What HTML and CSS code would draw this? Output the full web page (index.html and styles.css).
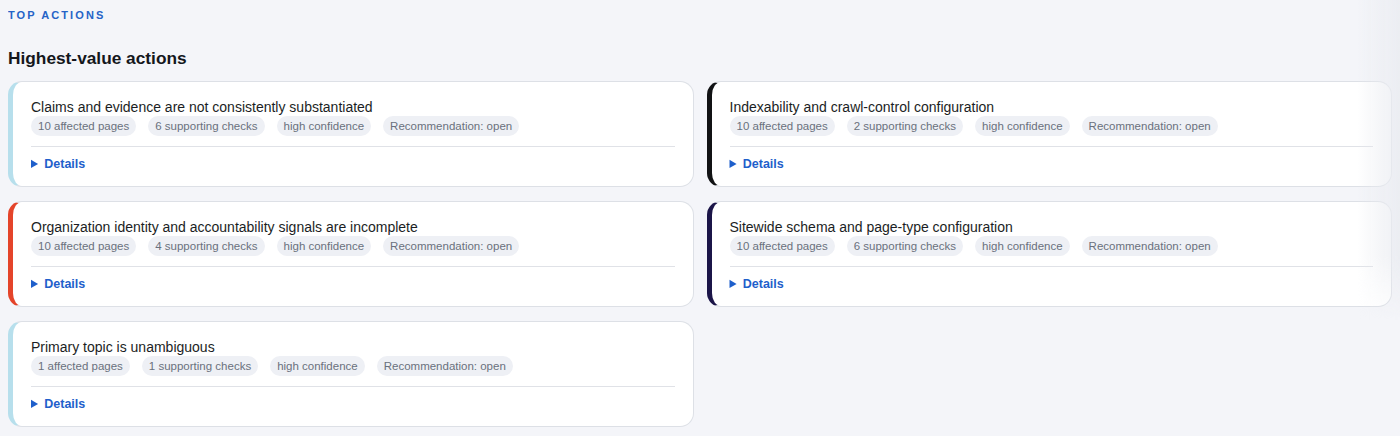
FILE: index.html
```html
<!DOCTYPE html>
<html lang="en">
<head>
<meta charset="UTF-8">
<meta name="viewport" content="width=device-width, initial-scale=1.0">
<title>Top actions</title>
<link rel="stylesheet" href="styles.css">
</head>
<body>
<section class="top-actions">
  <div class="eyebrow">TOP ACTIONS</div>
  <h2 class="section-title">Highest-value actions</h2>

  <div class="action-grid">
    <!-- Row 1 -->
    <div class="action-card tone-sky">
      <div class="action-title">Claims and evidence are not consistently substantiated</div>
      <div class="chips">
        <span class="chip">10 affected pages</span>
        <span class="chip">6 supporting checks</span>
        <span class="chip">high confidence</span>
        <span class="chip">Recommendation: open</span>
      </div>
      <details class="action-details">
        <summary>Details</summary>
      </details>
    </div>

    <div class="action-card tone-ink">
      <div class="action-title">Indexability and crawl-control configuration</div>
      <div class="chips">
        <span class="chip">10 affected pages</span>
        <span class="chip">2 supporting checks</span>
        <span class="chip">high confidence</span>
        <span class="chip">Recommendation: open</span>
      </div>
      <details class="action-details">
        <summary>Details</summary>
      </details>
    </div>

    <!-- Row 2 -->
    <div class="action-card tone-red">
      <div class="action-title">Organization identity and accountability signals are incomplete</div>
      <div class="chips">
        <span class="chip">10 affected pages</span>
        <span class="chip">4 supporting checks</span>
        <span class="chip">high confidence</span>
        <span class="chip">Recommendation: open</span>
      </div>
      <details class="action-details">
        <summary>Details</summary>
      </details>
    </div>

    <div class="action-card tone-navy">
      <div class="action-title">Sitewide schema and page-type configuration</div>
      <div class="chips">
        <span class="chip">10 affected pages</span>
        <span class="chip">6 supporting checks</span>
        <span class="chip">high confidence</span>
        <span class="chip">Recommendation: open</span>
      </div>
      <details class="action-details">
        <summary>Details</summary>
      </details>
    </div>

    <!-- Row 3 -->
    <div class="action-card tone-sky">
      <div class="action-title">Primary topic is unambiguous</div>
      <div class="chips">
        <span class="chip">1 affected pages</span>
        <span class="chip">1 supporting checks</span>
        <span class="chip">high confidence</span>
        <span class="chip">Recommendation: open</span>
      </div>
      <details class="action-details">
        <summary>Details</summary>
      </details>
    </div>
  </div>
</section>
<div class="edge-fade"></div>
</body>
</html>
```

FILE: styles.css
```css
/* General Styles */
body {
  font-family: "Liberation Sans", Arial, sans-serif;
  margin: 8px;
  background-color: #f4f5f9;
  color: #1b1e24;
}
/* Section header */
.eyebrow {
  font-size: 11px;
  font-weight: bold;
  letter-spacing: 0.19em;
  color: #2563c7;
  line-height: 14px;
}
.section-title {
  font-size: 17.3px;
  font-weight: bold;
  color: #14171c;
  margin: 25px 0 12px;
  line-height: 22px;
}
/* Cards */
.action-grid {
  display: grid;
  grid-template-columns: 1fr 1fr;
  gap: 14px 13px;
}
.action-card {
  background-color: #fff;
  border: 1px solid #dde0e6;
  border-left: 5px solid #b9e0ec;
  border-radius: 14px;
  padding: 17px 18px 15px 18px;
}
.tone-sky { border-left-color: #b7dfec; }
.tone-ink { border-left-color: #111214; }
.tone-red { border-left-color: #e4442a; }
.tone-navy { border-left-color: #1b1548; }
.action-title {
  font-size: 14px;
  line-height: 17px;
}
.chips {
  display: flex;
  gap: 12px;
}
.chip {
  background-color: #eef0f5;
  color: #6a717d;
  font-size: 11.5px;
  line-height: 14px;
  padding: 3px 7px;
  border-radius: 999px;
}
.action-details {
  border-top: 1px solid #e0e2e7;
  margin-top: 10px;
  padding-top: 10px;
}
.action-details summary {
  font-size: 12.5px;
  font-weight: bold;
  line-height: 14px;
  color: #1e5fcb;
  cursor: pointer;
}
/* Right edge fade */
.edge-fade {
  position: fixed;
  top: 0;
  right: 0;
  width: 44px;
  height: 320px;
  background: linear-gradient(to right, rgba(234, 236, 241, 0), rgba(234, 236, 241, 0.85));
  -webkit-mask-image: linear-gradient(to bottom, #000 80%, transparent);
  mask-image: linear-gradient(to bottom, #000 80%, transparent);
  pointer-events: none;
}
```
